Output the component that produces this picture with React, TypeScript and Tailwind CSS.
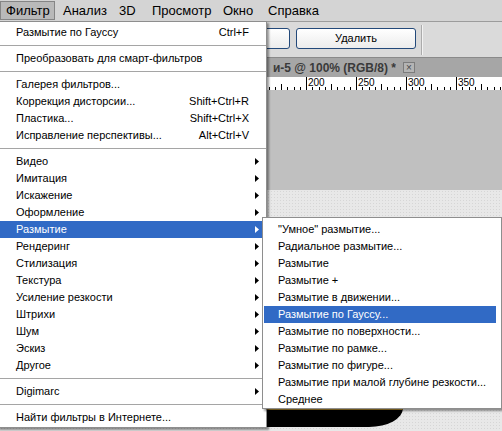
import React from 'react'

type Entry = { label: string; shortcut?: string; sub?: boolean; active?: boolean } | null

const filterItems: Entry[] = [
  { label: 'Размытие по Гауссу', shortcut: 'Ctrl+F' },
  null,
  { label: 'Преобразовать для смарт-фильтров' },
  null,
  { label: 'Галерея фильтров...' },
  { label: 'Коррекция дисторсии...', shortcut: 'Shift+Ctrl+R' },
  { label: 'Пластика...', shortcut: 'Shift+Ctrl+X' },
  { label: 'Исправление перспективы...', shortcut: 'Alt+Ctrl+V' },
  null,
  { label: 'Видео', sub: true },
  { label: 'Имитация', sub: true },
  { label: 'Искажение', sub: true },
  { label: 'Оформление', sub: true },
  { label: 'Размытие', sub: true, active: true },
  { label: 'Рендеринг', sub: true },
  { label: 'Стилизация', sub: true },
  { label: 'Текстура', sub: true },
  { label: 'Усиление резкости', sub: true },
  { label: 'Штрихи', sub: true },
  { label: 'Шум', sub: true },
  { label: 'Эскиз', sub: true },
  { label: 'Другое', sub: true },
  null,
  { label: 'Digimarc', sub: true },
  null,
  { label: 'Найти фильтры в Интернете...' },
]

const blurItems = [
  '"Умное" размытие...',
  'Радиальное размытие...',
  'Размытие',
  'Размытие +',
  'Размытие в движении...',
  'Размытие по Гауссу...',
  'Размытие по поверхности...',
  'Размытие по рамке...',
  'Размытие по фигуре...',
  'Размытие при малой глубине резкости...',
  'Среднее',
]

const Arrow = ({ white }: { white?: boolean }) => (
  <svg width="4" height="7" viewBox="0 0 4 7" className="block">
    <polygon points="0,0 4,3.5 0,7" fill={white ? '#ffffff' : '#000000'} />
  </svg>
)

const MenuRow = ({ item }: { item: Exclude<Entry, null> }) => (
  <div
    className={
      (item.active ? 'bg-[#316ac5] text-white ' : 'text-black ') +
      (item.sub ? 'pr-[4px] ' : 'pr-[14px] ') +
      'flex h-[17px] items-center pl-[16px] whitespace-nowrap'
    }
  >
    <span>{item.label}</span>
    {item.shortcut && <span className="ml-auto">{item.shortcut}</span>}
    {item.sub && (
      <span className="ml-auto">
        <Arrow white={item.active} />
      </span>
    )}
  </div>
)

// horizontal ruler: 0 sits at x=106, one pixel per unit at 100%
const Ruler = () => {
  const ticks = Array.from({ length: 64 }, (_, i) => i)
  return (
    <svg width="502" height="13" className="block shrink-0 bg-white" shapeRendering="crispEdges">
      {ticks.map((i) => {
        const x = Math.round(106 + i * 6.25) + 0.5
        const major = i % 8 === 0
        const half = i % 8 === 4
        return (
          <g key={i}>
            <line x1={x} x2={x} y1={major ? 0 : half ? 7 : 10} y2={13} stroke="#000" strokeWidth="1" />
            {major && x > 280 && x < 480 && (
              <text x={x + 1.5} y={8.5} fontSize="10" fontFamily="Liberation Sans, Arial, sans-serif" fill="#000">
                {i * 6.25}
              </text>
            )}
          </g>
        )
      })}
    </svg>
  )
}

export default function App() {
  return (
    <div className="relative flex h-[431px] w-[502px] flex-col overflow-hidden bg-[#e6e6e6] font-['Liberation_Sans',Arial,sans-serif] text-[11px] text-black">
      {/* menu bar */}
      <div className="flex h-[22px] shrink-0 border-b border-[#9c9c9c] bg-[#d4d4d4] text-[13px]">
        <div className="w-[56px]">
          <div className="mt-[1px] flex h-[19px] w-[55px] items-center border border-[#858585] bg-[#b9b9b9] pl-[5px]">
            Фильтр
          </div>
        </div>
        <div className="flex w-[57px] items-center pl-[7px]">Анализ</div>
        <div className="flex w-[33px] items-center pl-[6px]">3D</div>
        <div className="flex w-[71px] items-center pl-[6px]">Просмотр</div>
        <div className="flex w-[45px] items-center pl-[6px]">Окно</div>
        <div className="flex items-center pl-[6px]">Справка</div>
      </div>

      {/* options bar */}
      <div className="flex h-[35px] shrink-0 items-start bg-[#dadada] pt-[6px]">
        <div className="ml-[170px] h-[21px] w-[120px] rounded-[3px] border border-[#23497a] bg-gradient-to-b from-white to-[#ececec]" />
        <div className="ml-[6px] flex h-[21px] w-[120px] items-center justify-center rounded-[3px] border border-[#23497a] bg-gradient-to-b from-white to-[#ececec]">
          Удалить
        </div>
        <div className="-mt-[3px] ml-[5px] h-[30px] w-px bg-[#ababab]" />
        <div className="-mt-[3px] h-[30px] w-px bg-[#f2f2f2]" />
      </div>

      {/* document tab (its start is covered by the open menu) */}
      <div className="flex h-[20px] shrink-0 items-center border-t border-[#8a8a8a] bg-[#a6a6a6] pl-[267px]">
        <div className="flex w-[129px] justify-end overflow-hidden whitespace-nowrap text-[12px] font-bold text-[#3a3a3a]">
          <span className="shrink-0">и-5 @ 100% (RGB/8) *</span>
        </div>
        <div className="ml-[7px] flex h-[11px] w-[12px] items-center justify-center border border-[#7c7c7c] bg-[#b4b4b4] text-[10px] leading-none text-[#4a4a4a]">
          ×
        </div>
      </div>

      <Ruler />

      {/* canvas */}
      <div className="h-[100px] shrink-0 bg-[#c0c0c0]" />
      <div className="flex-1 bg-[#e8e8e8] bg-[radial-gradient(#d6d6d6_0.7px,transparent_0.9px)] bg-[length:3px_3px] pt-[218px]">
        <div className="ml-[200px] h-[19px] w-[203px] rounded-br-[34px_19px] border-t-2 border-[#b08a2e] bg-black" />
      </div>

      {/* Filter menu */}
      <div className="absolute left-[-3px] top-[21px] w-[270px] border border-[#8e8e8e] bg-white pb-[1px] pl-[2px] pr-[3px] pt-[2px] shadow-[2px_2px_2px_rgba(0,0,0,0.4)]">
        {filterItems.map((item, i) =>
          item ? (
            <MenuRow key={i} item={item} />
          ) : (
            <div key={i} className="-mr-[3px] flex h-[9px] items-center">
              <div className="h-px w-full bg-[#a5a5a5]" />
            </div>
          )
        )}
      </div>

      {/* Blur submenu */}
      <div className="absolute left-[262px] top-[217px] w-[240px] border border-[#8e8e8e] bg-white pl-[1px] pr-[5px] pt-[3px] shadow-[2px_2px_2px_rgba(0,0,0,0.4)]">
        {blurItems.map((label, i) => (
          <div
            key={i}
            className={
              (i === 5 ? 'bg-[#316ac5] text-white ' : 'text-black ') +
              'flex h-[17px] items-center whitespace-nowrap pl-[14px]'
            }
          >
            {label}
          </div>
        ))}
      </div>
    </div>
  )
}
